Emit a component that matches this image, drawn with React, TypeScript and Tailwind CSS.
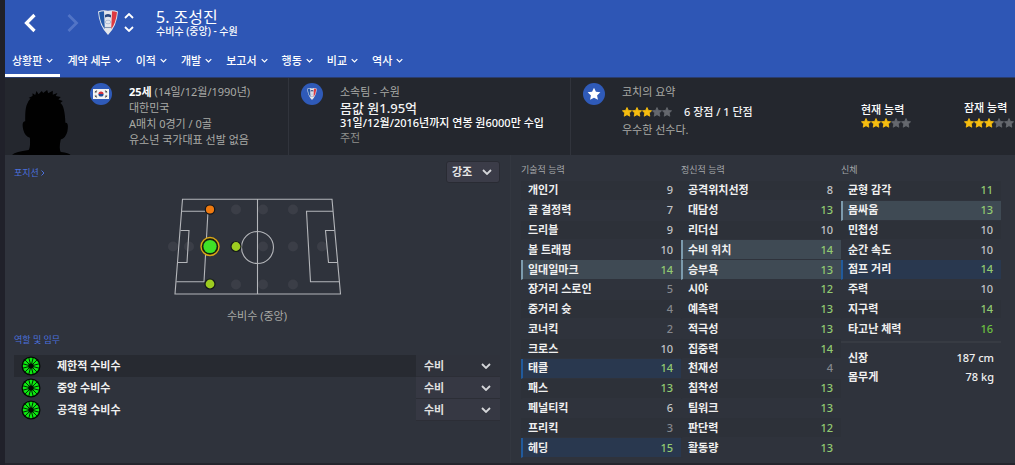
import React from "react";

type Mark = "steel" | "navy";
type Attribute = { name: string; value: number; mark?: Mark };

const tabs = ["상황판", "계약 세부", "이적", "개발", "보고서", "행동", "비교", "역사"];

const technical: Attribute[] = [
  { name: "개인기", value: 9 },
  { name: "골 결정력", value: 7 },
  { name: "드리블", value: 9 },
  { name: "볼 트래핑", value: 10 },
  { name: "일대일마크", value: 14, mark: "steel" },
  { name: "장거리 스로인", value: 5 },
  { name: "중거리 슛", value: 4 },
  { name: "코너킥", value: 2 },
  { name: "크로스", value: 10 },
  { name: "태클", value: 14, mark: "navy" },
  { name: "패스", value: 13 },
  { name: "페널티킥", value: 6 },
  { name: "프리킥", value: 3 },
  { name: "헤딩", value: 15, mark: "navy" },
];

const mental: Attribute[] = [
  { name: "공격위치선정", value: 8 },
  { name: "대담성", value: 13 },
  { name: "리더십", value: 10 },
  { name: "수비 위치", value: 14, mark: "steel" },
  { name: "승부욕", value: 13, mark: "steel" },
  { name: "시야", value: 12 },
  { name: "예측력", value: 13 },
  { name: "적극성", value: 13 },
  { name: "집중력", value: 14 },
  { name: "천재성", value: 4 },
  { name: "침착성", value: 13 },
  { name: "팀워크", value: 13 },
  { name: "판단력", value: 12 },
  { name: "활동량", value: 13 },
];

const physical: Attribute[] = [
  { name: "균형 감각", value: 11 },
  { name: "몸싸움", value: 13, mark: "steel" },
  { name: "민첩성", value: 10 },
  { name: "순간 속도", value: 10 },
  { name: "점프 거리", value: 14, mark: "navy" },
  { name: "주력", value: 10 },
  { name: "지구력", value: 14 },
  { name: "타고난 체력", value: 16 },
];

const roles = ["제한적 수비수", "중앙 수비수", "공격형 수비수"];

function valueColor(value: number) {
  if (value > 15) return "text-[#6cc040]";
  if (value > 10) return "text-[#93cb72]";
  if (value > 5) return "text-[#c3c5c8]";
  return "text-[#85888e]";
}

function Chevron({ className, up = false }: { className: string; up?: boolean }) {
  return (
    <svg viewBox="0 0 10 6" className={className} fill="none" stroke="currentColor" strokeWidth="1.8" aria-hidden="true">
      <path d={up ? "M1 5l4-4 4 4" : "M1 1l4 4 4-4"} />
    </svg>
  );
}

function Crest({ className }: { className: string }) {
  return (
    <svg viewBox="0 0 20 25" className={className} aria-hidden="true">
      <path d="M0 1.5Q5-.8 10 .8 15-.8 20 1.5 19 16 10 25 1 16 0 1.5z" fill="#e3e6ec" />
      <path d="M1 2.2Q3 1.2 6 1.200L6.800 19Q2 13 1 2.2z" fill="#2459a9" />
      <path d="M19 2.2Q17 1.2 14 1.2L13.200 19Q18 13 19 2.2z" fill="#dc3a42" />
      <path d="M7 5q3-2 6 0v2.4q-3-1.5-6 0z" fill="#2c4a80" />
      <ellipse cx="10" cy="12" rx="2.8" ry="1.8" fill="none" stroke="#9fb0cd" strokeWidth=".7" />
      <path d="M7 17.5h6" stroke="#8193b1" strokeWidth="1.1" />
    </svg>
  );
}

function KoreaFlag() {
  return (
    <svg viewBox="0 0 16 10" className="h-[10px] w-4" aria-hidden="true">
      <rect width="16" height="10" fill="#f4f4f4" />
      <path d="M5.4 5a2.6 2.6 0 0 1 5.2 0z" fill="#d2303b" />
      <path d="M5.4 5a2.6 2.6 0 0 0 5.2 0z" fill="#1d4a97" />
      <path d="M1.8 3l1.8-1.4M2.4 3.7l1.7-1.3M12.4 1.6L14.2 3M11.9 2.4l1.7 1.3M1.8 7l1.8 1.4M2.4 6.3l1.7 1.3M12.4 8.4L14.2 7M11.9 7.6l1.7-1.3" stroke="#222" strokeWidth=".8" />
    </svg>
  );
}

const STAR = "M8 .8l2.2 4.7 5.1.6-3.8 3.5 1 5.1L8 12.2l-4.5 2.5 1-5.1L.7 6.1l5.1-.6z";

function Stars() {
  return (
    <span className="flex" role="img" aria-label="3 / 5">
      {[0, 1, 2, 3, 4].map((i) => (
        <svg key={i} viewBox="0 0 16 16" className={`h-[10px] w-[10px] shrink-0 ${i < 3 ? "text-[#f6bd10]" : "text-[#65686e]"}`} aria-hidden="true">
          <path d={STAR} fill="currentColor" stroke="currentColor" strokeWidth="1.4" strokeLinejoin="round" />
        </svg>
      ))}
    </span>
  );
}

function Badge({ children }: { children: React.ReactNode }) {
  return (
    <span className="flex h-[22px] w-[22px] shrink-0 items-center justify-center rounded-full bg-[#2f5ab8]">{children}</span>
  );
}

function Silhouette() {
  return (
    <svg viewBox="36 24 184 209" className="h-[70px] w-[61px] shrink-0" aria-hidden="true">
      <path
        d="M36 233q12-9 50-14 6-7 4-37-15-4-20-24-6-26 6-26-1-32 4-48 5-14 12-20l-6-2 12-6 0-8 8 5 4-12 6 10 10-10 4 6 12-9 3 10 14-8 0 12 14-5-5 9 15 3-7 8 13 4-7 6q13 8 15 60 11-2 6 26-5 20-20 24-6 28 0 38 33 4 30 13z"
        fill="#010101"
      />
    </svg>
  );
}

const ghosts = [
  [173, 246], [189, 246], [236, 209], [263, 209], [293, 209], [263, 246],
  [293, 246], [322, 246], [236, 284], [263, 284], [293, 284],
];

function Pitch() {
  return (
    <svg viewBox="165 194 184 106" className="h-[106px] w-[184px]" role="img" aria-label="수비수 (중앙)">
      {ghosts.map(([x, y]) => (
        <circle key={`${x}-${y}`} cx={x} cy={y + 0.5} r="5" fill="#3b3e47" />
      ))}
      <g fill="none" stroke="#b4b6ba" strokeWidth="1.1">
        <path d="M182.5 199.3H332L340.5 294H175z" />
        <path d="M257.5 199v95" />
        <circle cx="257.5" cy="247.5" r="16" />
        <path d="M182 211.3h26L204 281.7H176.3" />
        <path d="M180.5 230.5H189L187 262.5H177.5" />
        <path d="M333 211.3H306.5L310.5 281.7H339" />
        <path d="M334.5 230.5H325.5L328.5 262.5H337.5" />
      </g>
      <g stroke="#15181b" strokeWidth="1.2">
        <circle cx="210" cy="209.5" r="4.7" fill="#f07a10" />
        <circle cx="236" cy="246.5" r="5" fill="#9dcc20" />
        <circle cx="210" cy="284" r="5" fill="#9dcc20" />
      </g>
      <circle cx="210" cy="246.5" r="9" fill="#17210f" stroke="#dba716" strokeWidth="1.4" />
      <circle cx="210" cy="246.5" r="6.6" fill="#3fe227" />
    </svg>
  );
}

function RoleWheel() {
  return (
    <svg viewBox="-10 -10 20 20" className="h-5 w-5" aria-hidden="true">
      <circle r="9.5" fill="#040804" />
      <circle r="5.5" fill="none" stroke="#0ce810" strokeWidth="5.4" />
      {Array.from({ length: 12 }, (_, i) => (
        <path key={i} d="M0-2.5V-8.5" stroke="#040804" strokeWidth=".8" transform={`rotate(${i * 30 + 15})`} />
      ))}
    </svg>
  );
}

function AttributeTable({ title, rows, height }: { title: string; rows: Attribute[]; height: string }) {
  return (
    <table className={`w-full border-separate border-spacing-0 text-[11px] leading-4 ${height}`}>
      <caption className="h-[26px] pt-[7px] text-left text-[9px] leading-4 text-[#a5a7aa]">{title}</caption>
      <tbody>
        {rows.map(({ name, value, mark }, i) => {
          const fill =
            mark === "steel" ? "bg-[#3f4a54]" : mark === "navy" ? "bg-[#29384f]" : i % 2 === 0 ? "bg-[#2d3139]" : "bg-[#2f333c]";
          const edge = mark === "steel" ? "border-l-[#7c9bad]" : mark === "navy" ? "border-l-[#215a9c]" : "border-l-transparent";
          return (
            <tr key={name}>
              <th
                scope="row"
                className={`border-b border-l-2 border-b-[#2f333c] py-0 pl-[5px] text-left font-bold text-[#f0f0f0] ${edge} ${fill}`}
              >
                {name}
              </th>
              <td className={`border-b border-b-[#2f333c] py-0 pr-2 text-right font-medium ${valueColor(value)} ${fill}`}>{value}</td>
            </tr>
          );
        })}
      </tbody>
    </table>
  );
}

export default function App() {
  return (
    <div className="overflow-hidden bg-[#20212a] pl-[5px] font-['Noto_Sans','Noto_Sans_CJK_KR',sans-serif] text-[11px] leading-4 text-[#a9aaa6]">
      <header className="bg-[#2e56b5] text-white">
        <div className="flex h-[45px] items-center">
          <button aria-label="뒤로" className="ml-[17px] flex w-4 justify-center">
            <svg viewBox="0 0 12 20" className="h-5 w-3" fill="none" stroke="currentColor" strokeWidth="3.2" aria-hidden="true">
              <path d="M10.5 2L2.5 10l8 8" />
            </svg>
          </button>
          <button aria-label="앞으로" className="ml-[27px] flex w-4 justify-center text-[#5274c6]">
            <svg viewBox="0 0 12 20" className="h-5 w-3" fill="none" stroke="currentColor" strokeWidth="2.8" aria-hidden="true">
              <path d="M1.5 2l8 8-8 8" />
            </svg>
          </button>
          <Crest className="ml-[17px] h-[25px] w-5" />
          <div className="ml-[6px] flex flex-col gap-[7px]">
            <button aria-label="이전 선수" className="block">
              <Chevron up className="h-[6px] w-[10px]" />
            </button>
            <button aria-label="다음 선수" className="block">
              <Chevron className="h-[6px] w-[10px]" />
            </button>
          </div>
          <div className="ml-[22px]">
            <h1 className="text-[16px] leading-4">5. 조성진</h1>
            <p className="text-[10px] leading-3 font-medium">수비수 (중앙) - 수원</p>
          </div>
        </div>
        <nav className="flex h-8">
          {tabs.map((tab, i) => (
            <button
              key={tab}
              className={`flex items-center gap-1 border-b-[3px] px-[7px] pt-[2px] font-medium whitespace-nowrap ${i === 0 ? "border-white" : "border-transparent"}`}
            >
              {tab}
              <Chevron className="h-[5px] w-[7px]" />
            </button>
          ))}
        </nav>
      </header>

      <section className="grid h-[78px] grid-cols-[283fr_282fr_445fr] border-t border-[#2a3c6c] bg-[#24272e]">
        <div className="flex overflow-hidden pl-[7px] whitespace-nowrap">
          <div className="flex items-end">
            <Silhouette />
          </div>
          <div className="ml-[17px] pt-[5px]">
            <Badge>
              <KoreaFlag />
            </Badge>
          </div>
          <div className="ml-[17px] pt-[6px]">
            <p>
              <strong className="text-white">25세</strong> (14일/12월/1990년)
            </p>
            <p>대한민국</p>
            <p>A매치 0경기 / 0골</p>
            <p>유소년 국가대표 선발 없음</p>
          </div>
        </div>
        <div className="flex overflow-hidden border-l border-[#31343c] pl-3 whitespace-nowrap">
          <div className="pt-[5px]">
            <Badge>
              <Crest className="h-3 w-[10px]" />
            </Badge>
          </div>
          <div className="ml-[17px] pt-[6px]">
            <p>소속팀 - 수원</p>
            <p className="text-[13px] font-medium text-[#f2f2f2]">몸값 원1.95억</p>
            <p className="leading-[14px] font-medium text-white">31일/12월/2016년까지 연봉 원6000만 수입</p>
            <p className="text-[#8f908d]">주전</p>
          </div>
        </div>
        <div className="flex overflow-hidden border-l border-[#31343c] pl-3 whitespace-nowrap">
          <div className="pt-[5px]">
            <Badge>
              <svg viewBox="0 0 16 16" className="h-[14px] w-[14px] text-white" aria-hidden="true">
                <path d={STAR} fill="currentColor" />
              </svg>
            </Badge>
          </div>
          <div className="ml-[17px] w-[239px] shrink-0 pt-[6px]">
            <p>코치의 요약</p>
            <p className="flex items-center gap-3 pt-1 pb-[2px] font-medium text-[#f2f2f2]">
              <Stars />6 장점 / 1 단점
            </p>
            <p>우수한 선수다.</p>
          </div>
          <div className="w-[103px] shrink-0 pt-6 font-medium text-white">
            <p>현재 능력</p>
            <Stars />
          </div>
          <div className="shrink-0 pt-[22px] font-medium text-white">
            <p className="pb-[2px]">잠재 능력</p>
            <Stars />
          </div>
        </div>
      </section>

      <main className="grid grid-cols-2 border-b-2 border-[#24252d] bg-[#2f333c]">
        <section className="pr-[10px] pl-[9px]">
          <div className="flex items-start justify-between pt-[6px]">
            <a href="#position" className="flex items-center gap-[2px] pt-1 text-[9px] text-[#4a70dc]">
              포지션
              <svg viewBox="0 0 4 6" className="h-[6px] w-1" fill="none" stroke="currentColor" strokeWidth="1" aria-hidden="true">
                <path d="M.5.5L3 3 .5 5.5" />
              </svg>
            </a>
            <label className="relative flex items-center">
              <select
                aria-label="강조"
                className="h-[22px] w-[54px] appearance-none rounded-[3px] border border-[#292b33] bg-[#3b3c48] pl-[5px] font-bold text-[#e8e8e8]"
              >
                <option>강조</option>
              </select>
              <Chevron className="pointer-events-none absolute right-2 h-[6px] w-[10px] text-[#d5d6d9]" />
            </label>
          </div>
          <figure className="flex flex-col items-center pt-[11px]">
            <Pitch />
            <figcaption className="pt-2">수비수 (중앙)</figcaption>
          </figure>

          <h2 className="pt-2 text-[9px] text-[#4a70dc]">역할 및 임무</h2>
          <ul className="pt-[7px]">
            {roles.map((role, i) => (
              <li key={role} className={`flex h-[22px] items-center pl-[7px] ${i === 0 ? "bg-[#272a31]" : ""}`}>
                <RoleWheel />
                <span className="ml-4 flex-1 font-bold text-[#f0f0f0]">{role}</span>
                <label className="relative flex items-center">
                  <select
                    aria-label={role}
                    className={`h-[22px] w-[84px] appearance-none border-b border-[#2c2e36] pl-2 font-bold text-[#e0e0e0] ${i === 0 ? "bg-[#2f323b]" : "bg-[#363843]"}`}
                  >
                    <option>수비</option>
                  </select>
                  <Chevron className="pointer-events-none absolute right-[9px] h-[6px] w-[10px] text-[#d5d6d9]" />
                </label>
              </li>
            ))}
          </ul>
        </section>

        <section className="grid grid-cols-3 items-start border-l border-[#333740] pr-[14px] pb-[5px] pl-[10px]">
          <AttributeTable title="기술적 능력" rows={technical} height="h-[277px]" />
          <AttributeTable title="정신적 능력" rows={mental} height="h-[277px]" />
          <div>
            <AttributeTable title="신체" rows={physical} height="h-[158px]" />
            <dl className="mt-[2px] grid grid-cols-2 gap-y-[3px] border-t-2 border-[#373b43] px-[7px] pt-[7px] font-medium text-[#f0f0f0]">
              <dt className="font-bold">신장</dt>
              <dd className="text-right">187 cm</dd>
              <dt className="font-bold">몸무게</dt>
              <dd className="text-right">78 kg</dd>
            </dl>
          </div>
        </section>
      </main>
    </div>
  );
}
